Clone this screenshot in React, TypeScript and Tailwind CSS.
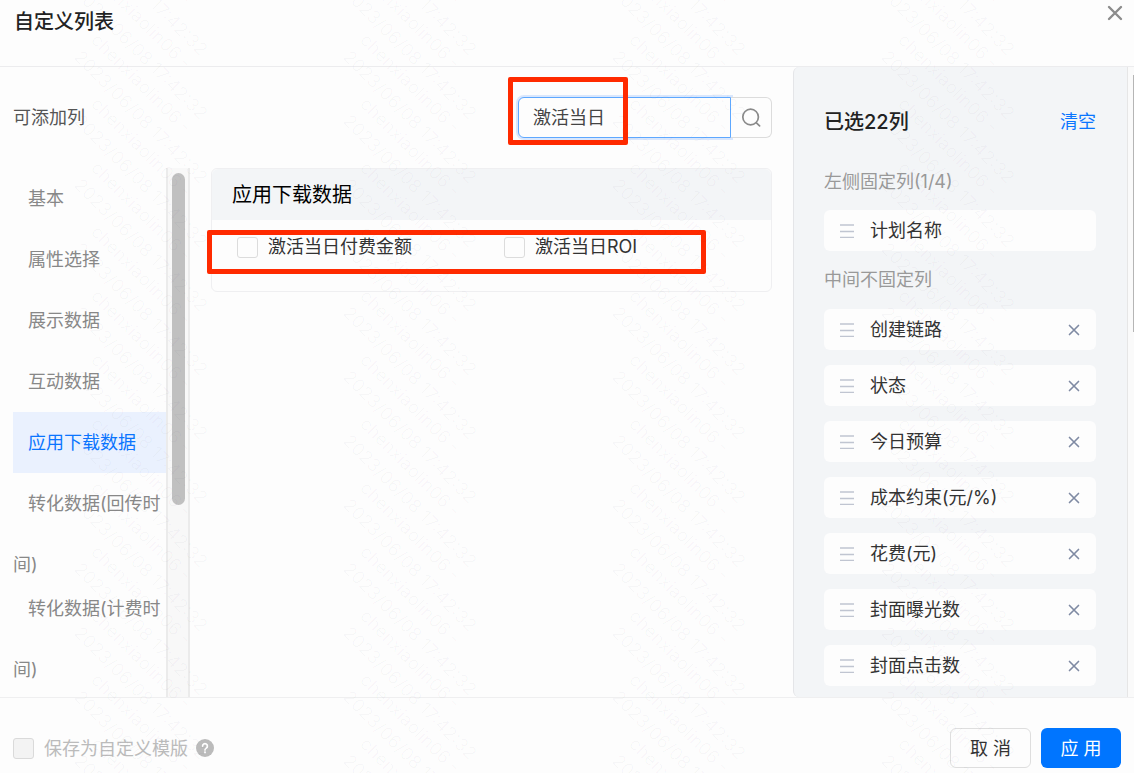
import React, { useState } from 'react';

interface ColumnGroup {
  name: string;
  columns: string[];
}

const COLUMN_GROUPS: ColumnGroup[] = [
  { name: '基本', columns: [] },
  { name: '属性选择', columns: [] },
  { name: '展示数据', columns: [] },
  { name: '互动数据', columns: [] },
  { name: '应用下载数据', columns: ['激活当日付费金额', '激活当日ROI'] },
  { name: '转化数据(回传时间)', columns: [] },
  { name: '转化数据(计费时间)', columns: [] },
];

const FIXED_COLUMNS = ['计划名称'];

const FREE_COLUMNS = [
  '创建链路',
  '状态',
  '今日预算',
  '成本约束(元/%)',
  '花费(元)',
  '封面曝光数',
  '封面点击数',
];

const WATERMARK_COLS = [0, 1, 2, 3];
const WATERMARK_ROWS = Array.from({ length: 14 }, (_, i) => i - 2);

function CrossIcon({ size, width }: { size: number; width: number }) {
  return (
    <svg
      width={size}
      height={size}
      viewBox="0 0 16 16"
      fill="none"
      stroke="currentColor"
      strokeWidth={width}
      strokeLinecap="round"
    >
      <path d="M2 2 14 14M14 2 2 14" />
    </svg>
  );
}

function SearchIcon() {
  return (
    <svg
      width="20"
      height="20"
      viewBox="0 0 20 20"
      fill="none"
      stroke="#8a8a8a"
      strokeWidth="1.7"
      strokeLinecap="round"
    >
      <circle cx="9.6" cy="9" r="7.8" />
      <path d="m15.4 14.8 3.2 3" />
    </svg>
  );
}

function DragIcon() {
  return (
    <svg width="14" height="14" viewBox="0 0 14 14" stroke="#c0c5d1">
      <path d="M0 1H14M0 7.5H14M0 13.5H14" strokeWidth="1.4" />
    </svg>
  );
}

function HelpIcon() {
  return (
    <svg width="18" height="18" viewBox="0 0 18 18" fill="none">
      <circle cx="9" cy="9" r="9" fill="#bbb" />
      <path
        d="M6.6 7.1a2.4 2.4 0 1 1 3.7 2c-.8.5-1.3.9-1.3 1.8"
        stroke="#fff"
        strokeWidth="1.7"
        strokeLinecap="round"
      />
      <circle cx="9" cy="13.3" r="1.1" fill="#fff" />
    </svg>
  );
}

function Watermark() {
  return (
    <svg
      aria-hidden="true"
      className="pointer-events-none absolute inset-0 h-full w-full"
      fontSize="18"
      fill="#334"
      fillOpacity="0.03"
    >
      {WATERMARK_COLS.map((col) =>
        WATERMARK_ROWS.map((row) => (
          <g
            key={`${col}-${row}`}
            transform={`translate(${90 + col * 269} ${41 + row * 64}) rotate(45)`}
          >
            <text>chenxiaolin06 -</text>
            <text y="24">2023/06/08 17:42:32</text>
          </g>
        )),
      )}
    </svg>
  );
}

function SelectedItem({
  name,
  handleRemove,
}: {
  name: string;
  handleRemove?: () => void;
}) {
  return (
    <li className="flex h-[41px] items-center rounded-md bg-[#fdfdfd] pr-4 pl-4">
      <DragIcon />
      <span className="ml-4 flex-1 text-[18px] text-[#333]">{name}</span>
      {handleRemove && (
        <button
          type="button"
          aria-label={`移除${name}`}
          className="text-[#7f8aa3]"
          onClick={handleRemove}
        >
          <CrossIcon size={12} width={2.2} />
        </button>
      )}
    </li>
  );
}

function App() {
  const [keyword, setKeyword] = useState('激活当日');
  const [activeGroup, setActiveGroup] = useState('应用下载数据');
  const [freeColumns, setFreeColumns] = useState(FREE_COLUMNS);

  const group = COLUMN_GROUPS.find(({ name }) => name === activeGroup);

  return (
    <div className="relative flex h-screen flex-col overflow-hidden bg-[#fdfdfd] font-['Inter','Noto_Sans_CJK_SC',sans-serif] text-[18px] text-[#333]">
      <header className="flex h-[67px] shrink-0 items-start justify-between border-b border-[#ececee] pr-[11px] pl-[14px]">
        <h1 className="pt-[7px] text-[20px] leading-[30px] font-medium text-[#222]">
          自定义列表
        </h1>
        <button type="button" aria-label="关闭" className="pt-[5px] text-[#8c8c8c]">
          <CrossIcon size={16} width={2.4} />
        </button>
      </header>

      <main className="flex min-h-0 flex-1">
        <section className="flex min-w-0 flex-1 flex-col pr-[21px] pl-[13px]">
          <div className="flex shrink-0 items-center justify-between pt-[30px] pb-[30px]">
            <h2 className="text-[18px] text-[#555]">可添加列</h2>
            <div className="relative flex h-[41px] w-[254px]">
              <input
                type="text"
                aria-label="搜索列"
                className="w-0 flex-1 rounded-l-md border border-[#5ea8ff] bg-[#fdfdfd] px-[14px] text-[#444] ring-2 ring-[#d9e7fd] outline-none"
                value={keyword}
                onChange={(e) => setKeyword(e.target.value)}
              />
              <button
                type="button"
                aria-label="搜索"
                className="flex w-[41px] items-center justify-center rounded-r-md border border-l-0 border-[#dcdcdc] bg-[#fdfdfd]"
              >
                <SearchIcon />
              </button>
              <div className="pointer-events-none absolute -top-5 -left-[10px] h-[68px] w-[120px] rounded-xs border-5 border-[#ff2a00]" />
            </div>
          </div>

          <div className="flex min-h-0 flex-1">
            <nav className="w-[153px] shrink-0 overflow-hidden">
              {COLUMN_GROUPS.map(({ name }) => (
                <a
                  key={name}
                  href="#group"
                  className={`block max-h-[105px] indent-[15px] leading-[61px] ${
                    name === activeGroup
                      ? 'bg-[#eaf1fe] text-[#0a75ff]'
                      : 'text-[#888]'
                  }`}
                  onClick={(e) => {
                    e.preventDefault();
                    setActiveGroup(name);
                  }}
                >
                  {name}
                </a>
              ))}
            </nav>
            <div className="flex w-6 shrink-0 justify-center border-r-2 border-l-2 border-[#ebebeb] bg-[#f8f8f8] pt-[5px]">
              <div className="h-[332px] w-[13px] rounded-full bg-[#c0c0c0]" />
            </div>
            <div className="min-w-0 flex-1 pl-[21px]">
              <div className="rounded-md border border-[#efeff1]">
                <h3 className="rounded-t-md bg-[#f3f5f7] px-5 pt-[11px] pb-[10px] text-[20px] leading-[30px] text-black">
                  {activeGroup}
                </h3>
                <div className="relative grid h-[71px] grid-cols-[267px_1fr] items-start px-[25px] pt-[14px]">
                  {group?.columns.map((column) => (
                    <label
                      key={column}
                      className="flex items-center gap-[10px] leading-[26px]"
                    >
                      <input
                        type="checkbox"
                        className="size-[21px] appearance-none rounded-[3px] border border-[#dcdcdc] bg-[#fdfdfd] checked:bg-[#0075ff]"
                      />
                      {column}
                    </label>
                  ))}
                  <div className="pointer-events-none absolute top-[10px] right-[65px] -left-[5px] h-11 rounded-xs border-5 border-[#ff2a00]" />
                </div>
              </div>
            </div>
          </div>
        </section>

        <aside className="w-[334px] shrink-0 overflow-hidden rounded-l-md border-l border-[#e4e5e8] bg-[#f3f5f7] pr-[31px] pl-[30px]">
          <div className="flex items-center justify-between pt-10">
            <h2 className="text-[20px] leading-[30px] font-medium text-[#222]">
              已选22列
            </h2>
            <button
              type="button"
              className="leading-[26px] text-[#0a75ff]"
              onClick={() => setFreeColumns([])}
            >
              清空
            </button>
          </div>
          <h3 className="mt-8 text-[18px] leading-[26px] text-[#999]">
            左侧固定列(1/4)
          </h3>
          <ul className="mt-[15px]">
            {FIXED_COLUMNS.map((name) => (
              <SelectedItem key={name} name={name} />
            ))}
          </ul>
          <h3 className="mt-4 text-[18px] leading-[26px] text-[#999]">
            中间不固定列
          </h3>
          <ul className="mt-4 flex flex-col gap-[15px]">
            {freeColumns.map((name) => (
              <SelectedItem
                key={name}
                name={name}
                handleRemove={() =>
                  setFreeColumns((prev) => prev.filter((item) => item !== name))
                }
              />
            ))}
          </ul>
        </aside>
        <div className="flex w-[7px] shrink-0 justify-end border-l border-[#e6e6e6] bg-[#fafafa] pt-2">
          <div className="h-[257px] w-px bg-[#b5b5b5]" />
        </div>
      </main>

      <footer className="flex h-[76px] shrink-0 items-start justify-between border-t border-[#efeff0] pt-[30px] pr-[13px] pl-[13px]">
        <div className="flex h-10 items-center">
          <label className="flex items-center gap-[10px] text-[#bbb]">
            <input
              type="checkbox"
              disabled
              className="size-[21px] appearance-none rounded-[3px] border border-[#dadada] bg-[#f3f3f3]"
            />
            保存为自定义模版
          </label>
          <span className="ml-2">
            <HelpIcon />
          </span>
        </div>
        <div className="flex gap-[10px]">
          <button
            type="button"
            className="h-10 w-[81px] rounded-md border border-[#dedede] bg-[#fdfdfd] text-[#333]"
          >
            取 消
          </button>
          <button
            type="button"
            className="h-10 w-20 rounded-md bg-[#0075ff] text-white"
          >
            应 用
          </button>
        </div>
      </footer>

      <Watermark />
    </div>
  );
}

export default App;
